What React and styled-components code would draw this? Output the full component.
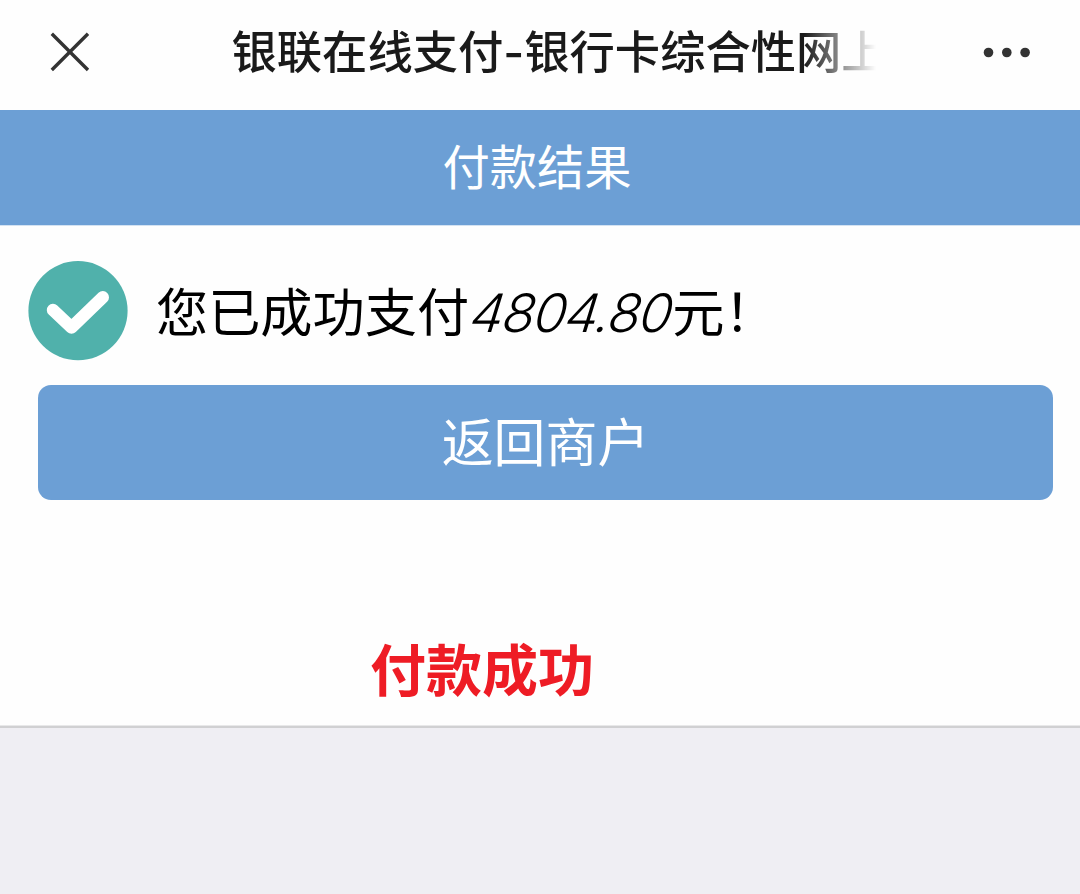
import React from "react";
import styled, { createGlobalStyle } from "styled-components";

const App = () => {
  return (
    <>
      <GlobalStyle />
      <PageStyled>
        <TopBar>
          <IconButton aria-label="关闭">
            <svg width="40" height="40" viewBox="0 0 40 40">
              <path
                d="M1.8 1.8 L38 38 M38 1.8 L1.8 38"
                stroke="#333"
                strokeWidth="3.4"
                fill="none"
              />
            </svg>
          </IconButton>
          <Title>
            银联在线支付<span>-</span>银行卡综合性网上
          </Title>
          <IconButton aria-label="更多">
            <svg width="48" height="12" viewBox="0 0 48 12">
              <circle cx="5.5" cy="6.5" r="4.8" fill="#333" />
              <circle cx="23.8" cy="6.5" r="4.8" fill="#333" />
              <circle cx="42.1" cy="6.5" r="4.8" fill="#333" />
            </svg>
          </IconButton>
        </TopBar>
        <Heading>付款结果</Heading>
        <Content>
          <Result>
            <svg width="100" height="100" viewBox="0 0 100 100">
              <circle cx="50" cy="49.7" r="49.6" fill="#50b1ab" />
              <path
                d="M25 49 L43.5 66.5 L74.8 36.3"
                stroke="#fff"
                strokeWidth="12.4"
                strokeLinecap="round"
                strokeLinejoin="round"
                fill="none"
              />
            </svg>
            <Message>
              您已成功支付<em>4804.80</em>元！
            </Message>
          </Result>
          <ReturnButton>返回商户</ReturnButton>
          <Note>付款成功</Note>
        </Content>
        <Footer />
      </PageStyled>
    </>
  );
};

const GlobalStyle = createGlobalStyle`
  * {
    box-sizing: border-box;
  }
  body {
    margin: 0;
    background-color: #fefefe;
    font-family: "Noto Sans CJK SC", sans-serif;
  }
`;

const PageStyled = styled.div`
  display: flex;
  flex-direction: column;
  height: 894px;
  overflow: hidden;
`;

const TopBar = styled.header`
  display: flex;
  align-items: center;
  justify-content: space-between;
  height: 110px;
  padding: 0 49px 6px 50px;
`;

const IconButton = styled.button`
  display: flex;
  padding: 0;
  border: none;
  background: none;
  cursor: pointer;
`;

const Title = styled.h1`
  width: 656px;
  margin: 0 -12px 0 34px;
  padding-bottom: 2px;
  white-space: nowrap;
  font-size: 45.3px;
  font-weight: 500;
  line-height: 66px;
  color: #1a1a1a;
  mask-image: linear-gradient(to right, #000 572px, transparent 644px);

  span {
    font-family: Inter, sans-serif;
  }
`;

const Heading = styled.h2`
  height: 115px;
  margin: 0;
  padding-right: 6px;
  background-color: #6c9fd5;
  box-shadow: 0 1px #d3e2f2;
  color: #fff;
  font-size: 47.3px;
  font-weight: 400;
  line-height: 109px;
  text-align: center;
`;

const Content = styled.main`
  display: flex;
  flex-direction: column;
  height: 501px;
  padding: 36px 27px 0 28px;
`;

const Result = styled.div`
  display: flex;
  align-items: center;
  gap: 28px;
  height: 100px;
`;

const Message = styled.p`
  margin: 0;
  color: #000;
  font-size: 52.2px;
  line-height: 101px;
  white-space: nowrap;

  em {
    display: inline-block;
    width: 203px;
    padding-left: 3px;
    font-family: Inter, "Noto Sans CJK SC", sans-serif;
    font-size: 53px;
    font-style: normal;
    font-weight: 350;
    letter-spacing: -1.2px;
    transform: skewX(-17deg);
  }
`;

const ReturnButton = styled.button`
  height: 115px;
  margin: 24px 0 0 10px;
  padding: 0 0 6px;
  border: none;
  border-radius: 13px;
  background-color: #6c9fd5;
  color: #fff;
  font-family: inherit;
  font-size: 51.9px;
  line-height: 109px;
  cursor: pointer;
`;

const Note = styled.p`
  margin: 127px 0 0 342px;
  color: #ee1c25;
  font-size: 56px;
  font-weight: 700;
  line-height: 80px;
`;

const Footer = styled.footer`
  flex: 1;
  border-top: 2px solid #d0d0d2;
  box-shadow: 0 -1px #e8e8e9;
  background-color: #efeef3;
`;

export default App;
